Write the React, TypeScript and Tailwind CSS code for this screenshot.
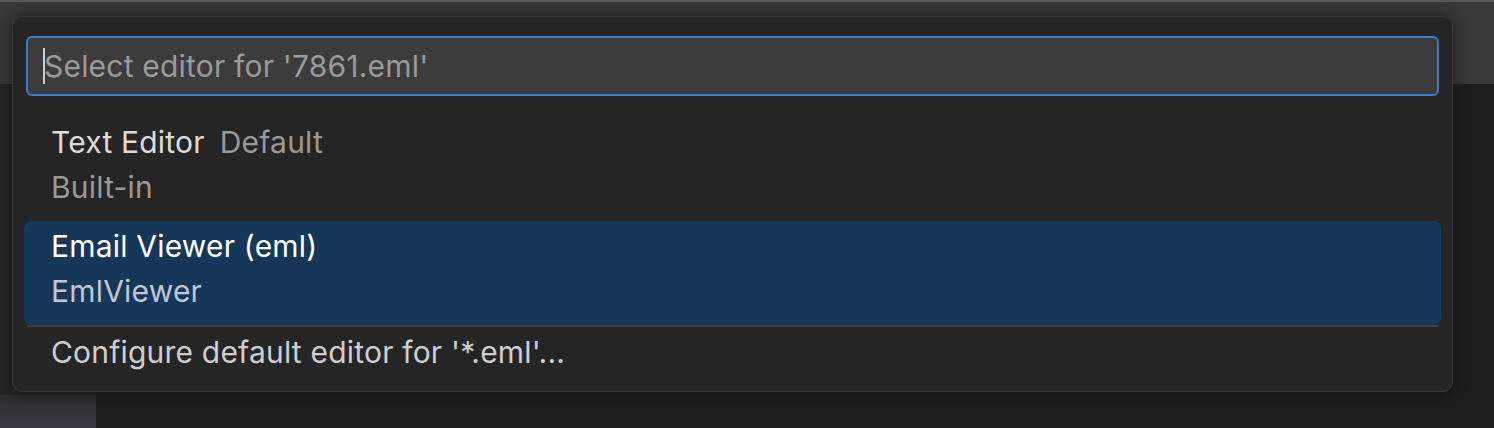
import React from "react";

const items = [
  { label: "Text Editor", badge: "Default", detail: "Built-in", active: false },
  { label: "Email Viewer (eml)", badge: "", detail: "EmlViewer", active: true },
];

export default function App() {
  return (
    <div
      className="relative w-[1494px] h-[428px] overflow-hidden bg-[#1e1e1e]"
      style={{ fontFamily: "Inter, 'Noto Sans', sans-serif" }}
    >
      {/* window chrome behind the picker */}
      <div className="h-[84px] bg-[#383838] border-t-2 border-[#5a5a5a]" />
      <div className="flex h-[344px]">
        <div className="w-[96px] flex flex-col">
          <div className="h-[311px] bg-[#252526]" />
          <div className="flex-1 bg-gradient-to-b from-[#2c2c30] to-[#3a3a40]" />
        </div>
        <div className="flex-1 bg-[#1e1e1e]" />
      </div>

      {/* quick pick */}
      <div className="absolute left-[12px] top-[16px] w-[1441px] h-[376px] rounded-[10px] bg-[#252526] border border-[#363636] shadow-[0_0_16px_rgba(0,0,0,0.45)] px-[11px] pt-[19px]">
        <div className="relative mx-[2px] h-[60px] rounded-[6px] border-2 border-[#3a7bd5] bg-[#3c3c3c] flex items-center pl-[16px]">
          <div className="absolute left-[15px] top-[10px] w-[2px] h-[36px] bg-[#d0d0d0]" />
          <span className="text-[30px] tracking-[0.2px] text-[#9b9b9b]">Select editor for '7861.eml'</span>
        </div>

        <div className="mt-[21px] flex flex-col">
          {items.map((it) => (
            <div
              key={it.label}
              className={`h-[104px] rounded-[8px] pl-[27px] pt-[3px] flex flex-col ${it.active ? "bg-[#17375a]" : ""}`}
            >
              <div className="h-[45px] flex items-center gap-[15px] text-[30px] tracking-[0.2px]">
                <span className={it.active ? "text-white" : "text-[#dcdcdc]"}>{it.label}</span>
                {it.badge && <span className="text-[#999999]">{it.badge}</span>}
              </div>
              <div className={`h-[45px] flex items-center text-[30px] tracking-[0.2px] ${it.active ? "text-[#bfc8d4]" : "text-[#9a9a9a]"}`}>
                {it.detail}
              </div>
            </div>
          ))}
          <div className="mx-[3px] h-[2px] bg-[#404044]" />
          <div className="h-[50px] pl-[27px] flex items-center text-[30px] tracking-[0.2px] text-[#cfcfcf]">
            Configure default editor for '*.eml'...
          </div>
        </div>
      </div>
    </div>
  );
}
